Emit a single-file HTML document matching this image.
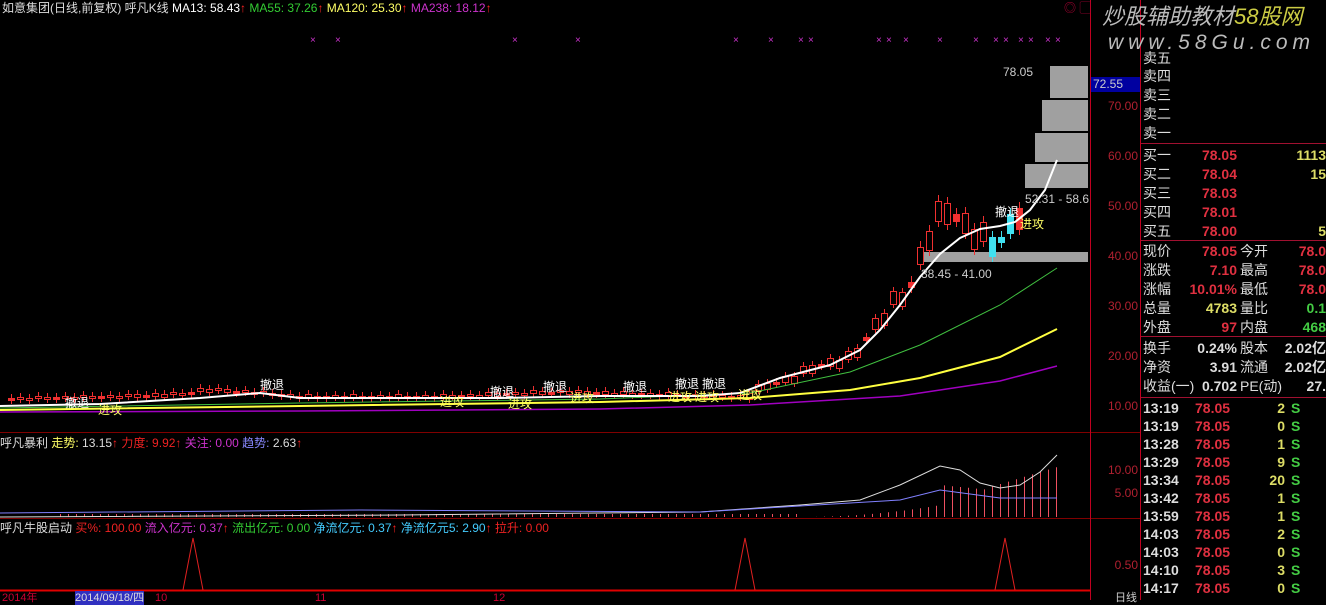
<!DOCTYPE html><html><head><meta charset="utf-8"><style>
body{margin:0;width:1326px;height:600px;background:#000;overflow:hidden;font-family:"Liberation Sans","Noto Sans CJK SC",sans-serif;position:relative;color:#ddd}
.t{position:absolute;font-size:12px;white-space:nowrap;line-height:14px}
.r{position:absolute;font-size:14px;line-height:18px;white-space:nowrap;font-family:"Liberation Sans","Noto Sans CJK SC",sans-serif}
.n{font-weight:bold}
</style></head><body>
<svg id="s" width="1326" height="600" style="position:absolute;left:0;top:0">
<g stroke="#800000" stroke-width="1">
<line x1="0" y1="432.5" x2="1140" y2="432.5"/><line x1="0" y1="518.5" x2="1140" y2="518.5"/>
</g>
<line x1="1090.5" y1="0" x2="1090.5" y2="600" stroke="#c00020"/>
<line x1="1140.5" y1="0" x2="1140.5" y2="600" stroke="#c00020"/>
<line x1="0" y1="590.5" x2="1090" y2="590.5" stroke="#e00000" stroke-width="2"/>
<g stroke="#a01030"><line x1="1141" y1="143.5" x2="1326" y2="143.5"/><line x1="1141" y1="240.5" x2="1326" y2="240.5"/><line x1="1141" y1="336.5" x2="1326" y2="336.5"/><line x1="1141" y1="397.5" x2="1326" y2="397.5"/></g>
<g fill="#a0a0a0"><rect x="1050" y="66" width="38" height="32"/><rect x="1042" y="100" width="46" height="31"/><rect x="1035" y="133" width="53" height="29"/><rect x="1025" y="164" width="63" height="24"/><rect x="920" y="252" width="168" height="10"/></g>
<rect x="1091" y="77" width="49" height="15" fill="#0000a0"/>
<g id="c"></g>
<g fill="none" stroke-width="1.5">
<polyline stroke="#a000c0" points="0,412 300,411 600,409 750,405 900,396 1000,381 1057,366"/>
<polyline stroke="#ffff40" stroke-width="2" points="0,410 300,406 600,402 750,398 850,390 920,378 1000,357 1057,329"/>
<polyline stroke="#40c040" stroke-width="1" points="0,408 300,403 600,399 750,393 850,372 920,345 1000,305 1057,268"/>
<polyline stroke="#fff" stroke-width="2" points="0,406 100,404 200,398 260,393 300,398 400,398 500,398 600,396 700,396 740,393 780,378 830,365 860,350 880,330 900,305 920,277 940,254 960,238 980,229 1000,226 1015,222 1030,210 1045,190 1057,160"/>
</g>
<g fill="none" stroke="#e02020"><polyline points="183,590 193,538 203,590"/><polyline points="735,590 745,538 755,590"/><polyline points="995,590 1005,538 1015,590"/></g>
<g id="ind"></g>
<polyline fill="none" stroke="#ddd" points="0,517 400,515 700,512 800,505 860,500 900,485 940,466 960,470 980,483 1000,488 1020,485 1040,472 1057,455"/>
<polyline fill="none" stroke="#8080ff" points="0,513 360,510 700,512 900,500 940,490 1000,498 1057,498"/>
</svg>
<div class="t" style="left:2px;top:1px">如意集团(日线,前复权) 呼凡K线 <span style="color:#fff">MA13: 58.43</span><span style="color:#f22">↑</span> <span style="color:#3c3">MA55: 37.26</span><span style="color:#f22">↑</span> <span style="color:#ff6">MA120: 25.30</span><span style="color:#f22">↑</span> <span style="color:#c3c">MA238: 18.12</span><span style="color:#f22">↑</span></div>
<div class="t" style="left:1064px;top:1px;color:#a03">◎ ▢</div>
<div class="t" id="x" style="left:0;top:34px;color:#c3c;font-size:10px"></div>
<div class="t" style="left:1003px;top:65px;color:#ccc">78.05</div>
<div class="t" style="left:1093px;top:77px;color:#ccc">72.55</div>
<div class="t" style="left:1025px;top:192px;color:#ccc">52.31 - 58.6</div>
<div class="t" style="left:921px;top:267px;color:#ccc">38.45 - 41.00</div>
<div class="t" style="left:1020px;top:217px;color:#ff6">进攻</div>
<div class="t" style="left:995px;top:205px;color:#fff">撤退</div>
<div id="lbl"></div>
<div class="t" style="left:0;top:436px">呼凡暴利 <span style="color:#ff6">走势: </span><span>13.15</span><span style="color:#f22">↑</span> <span style="color:#e22">力度: 9.92↑</span> <span style="color:#c3c">关注: 0.00</span> <span style="color:#88f">趋势:</span> 2.63<span style="color:#f22">↑</span></div>
<div class="t" style="left:0;top:521px">呼凡牛股启动 <span style="color:#e22">买%: 100.00</span> <span style="color:#c3c">流入亿元: 0.37</span><span style="color:#f22">↑</span> <span style="color:#3c3">流出亿元: 0.00</span> <span style="color:#4cf">净流亿元: 0.37</span><span style="color:#f22">↑</span> <span style="color:#4cf">净流亿元5: 2.90</span><span style="color:#f22">↑</span> <span style="color:#e22">拉升: 0.00</span></div>
<div class="t" style="left:2px;top:591px;color:#c03;font-size:11px">2014年</div>
<div class="t" style="left:75px;top:591px;background:#3030c0;color:#ddd;font-size:11px">2014/09/18/四</div>
<div class="t" style="left:155px;top:591px;color:#c03;font-size:11px">10</div>
<div class="t" style="left:315px;top:591px;color:#c03;font-size:11px">11</div>
<div class="t" style="left:493px;top:591px;color:#c03;font-size:11px">12</div>
<div class="t" style="left:1115px;top:591px;color:#ccc;font-size:11px">日线</div>
<div id="ax"></div>
<div class="t" style="left:1102px;top:4px;font-size:22px;line-height:26px;color:#bbb;font-style:italic">炒股辅助教材<span style="color:#cc4">58股网</span></div>
<div class="t" style="left:1108px;top:32px;font-size:21px;line-height:22px;color:#bbb;font-style:italic;letter-spacing:5px">www.58Gu.com</div>
<div id="rp"></div>
<script>
var s=document.getElementById('c'),h='';
function Y(p){return Math.round(456-5*p)}
var pts=[[0,11.5],[100,12],[180,12.5],[200,13.5],[240,13],[300,12],[440,12],[500,12.5],[560,13],[640,12.5],[740,12],[760,14],[790,16],[810,18],[830,19],[850,20],[870,26],[890,31],[905,33],[915,39],[925,45],[935,48],[945,50],[960,47],[975,45],[985,43],[995,43],[1005,46],[1015,49],[1022,55]];
function P(x){for(var i=1;i<pts.length;i++)if(x<=pts[i][0]){var a=pts[i-1],b=pts[i];return a[1]+(b[1]-a[1])*(x-a[0])/(b[0]-a[0]);}return 55}
var k=0;for(var x=8;x<1025;x+=9){var p=P(x),amp=x>740?0.09:0.04,o=p*(1-amp*(((k*37)%5)/4)),c=p*(1+amp*(((k*53)%5)/4-0.3));k++;var t=Math.min(Y(o),Y(c)),b=Math.max(Y(o),Y(c));if(b-t<2)b=t+2;var col=(x>985&&x<1015)?'#40e0f0':'#f03030';var w=x>900?6:4;
h+='<line x1="'+(x+3.5)+'" x2="'+(x+3.5)+'" y1="'+(t-w)+'" y2="'+(b+w)+'" stroke="'+col+'"/>';h+='<rect x="'+(x+0.5)+'" y="'+(t+0.5)+'" width="6" height="'+(b-t)+'" fill="'+(c>=o&&x<985?'#000':col)+'" stroke="'+col+'"/>';}
s.innerHTML=h;
var g='';for(var x=800;x<1058;x+=8){var v=(x-800)/257;var yy=517-(x<940?v*v*40:(x<990?32-(x-940)*0.1:30+(x-990)*0.3));g+='<line x1="'+(x+0.5)+'" x2="'+(x+0.5)+'" y1="517" y2="'+yy+'" stroke="#f05060"/>'}
for(var x=60;x<800;x+=8){g+='<line x1="'+(x+0.5)+'" x2="'+(x+0.5)+'" y1="517" y2="514" stroke="#f05060"/>'}
document.getElementById('ind').innerHTML=g;
var xs=[310,335,512,575,733,768,798,808,876,886,903,937,973,993,1003,1018,1028,1045,1055],xt='';xs.forEach(function(x){xt+='<span style="position:absolute;left:'+x+'px">×</span>'});document.getElementById('x').innerHTML=xt;
var L=[[65,396,'撤退','#fff'],[98,403,'进攻','#ff6'],[260,378,'撤退','#fff'],[440,395,'进攻','#ff6'],[490,385,'撤退','#fff'],[508,397,'进攻','#ff6'],[543,380,'撤退','#fff'],[570,391,'进攻','#ff6'],[623,380,'撤退','#fff'],[675,377,'撤退','#fff'],[702,377,'撤退','#fff'],[668,390,'进攻','#ff6'],[695,390,'进攻','#ff6'],[738,388,'进攻','#ff6']],lt='';
L.forEach(function(l){lt+='<div class="t" style="left:'+l[0]+'px;top:'+l[1]+'px;color:'+l[3]+'">'+l[2]+'</div>'});document.getElementById('lbl').innerHTML=lt;
var a=[[99,'70.00'],[149,'60.00'],[199,'50.00'],[249,'40.00'],[299,'30.00'],[349,'20.00'],[399,'10.00'],[463,'10.00'],[486,'5.00'],[558,'0.50']],at='';
a.forEach(function(v){at+='<div class="t" style="left:1094px;width:44px;text-align:right;top:'+v[0]+'px;color:#b02030">'+v[1]+'</div>'});document.getElementById('ax').innerHTML=at;
var R='';function row(y,a,b,c,d,e,bc,ec){R+='<div class="r" style="left:1143px;top:'+y+'px;color:#ddd">'+a+'</div><div class="r n" style="left:1160px;width:77px;text-align:right;top:'+y+'px;color:'+bc+'">'+b+'</div><div class="r" style="left:1240px;top:'+y+'px">'+(d||'')+'</div><div class="r n" style="left:1240px;width:86px;text-align:right;top:'+y+'px;color:'+ec+'">'+e+'</div>'}
[['卖五',49],['卖四',67],['卖三',86],['卖二',105],['卖一',124]].forEach(function(v){row(v[1],v[0],'','','','','','')});
row(146,'买一','78.05','','','1113','#e03040','#dd6');row(165,'买二','78.04','','','15','#e03040','#dd6');row(184,'买三','78.03','','','','#e03040','#dd6');row(203,'买四','78.01','','','','#e03040','#dd6');row(222,'买五','78.00','','','5','#e03040','#dd6');
row(242,'现价','78.05','','今开','78.0','#e03040','#e03040');row(261,'涨跌','7.10','','最高','78.0','#e03040','#e03040');row(280,'涨幅','10.01%','','最低','78.0','#e03040','#e03040');row(299,'总量','4783','','量比','0.1','#dd6','#4c4');row(318,'外盘','97','','内盘','468','#e03040','#4c4');
row(339,'换手','0.24%','','股本','2.02亿','#ddd','#ddd');row(358,'净资','3.91','','流通','2.02亿','#ddd','#ddd');row(377,'收益(一)','0.702','','PE(动)','27.','#ddd','#ddd');
var tk=[['13:19',2],['13:19',0],['13:28',1],['13:29',9],['13:34',20],['13:42',1],['13:59',1],['14:03',2],['14:03',0],['14:10',3],['14:17',0]];
tk.forEach(function(v,i){var y=399+i*18;R+='<div class="r n" style="left:1143px;top:'+y+'px;color:#ddd">'+v[0]+'</div><div class="r n" style="left:1195px;top:'+y+'px;color:#e03040">78.05</div><div class="r n" style="left:1240px;width:45px;text-align:right;top:'+y+'px;color:#dd6">'+v[1]+'</div><div class="r n" style="left:1291px;top:'+y+'px;color:#4c4">S</div>'});
document.getElementById('rp').innerHTML=R;
</script>
</body></html>
